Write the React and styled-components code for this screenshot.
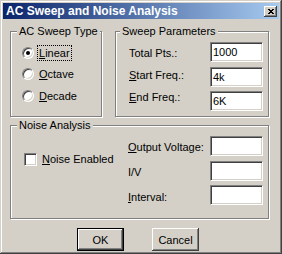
import React from 'react';
import styled, { createGlobalStyle } from 'styled-components';

const Global = createGlobalStyle`
  html, body { margin: 0; padding: 0; background: #D4D0C8; }
  body { font-family: "Liberation Sans", Arial, sans-serif; font-size: 11px; color: #000; }
  *, *::before, *::after { box-sizing: border-box; }
`;

const Window = styled.div`
  width: 282px;
  height: 254px;
  background: #D4D0C8;
  padding: 3px;
  display: flex;
  flex-direction: column;
  box-shadow: inset -1px -1px 0 #404040, inset 1px 1px 0 #D4D0C8,
    inset -2px -2px 0 #808080, inset 2px 2px 0 #fff;
`;

const TitleBar = styled.div`
  flex: none;
  height: 16px;
  display: flex;
  align-items: center;
  justify-content: space-between;
  padding: 0 2px 0 3px;
  background: linear-gradient(to right, #0A246A, #A6CAF0);
  color: #fff;
  font-weight: bold;
  font-size: 12px;
  line-height: 16px;
`;

const CloseBtn = styled.span`
  width: 13px;
  height: 11px;
  background: #D4D0C8;
  display: flex;
  align-items: center;
  justify-content: center;
  box-shadow: inset -1px -1px 0 #404040, inset 1px 1px 0 #fff, inset -2px -2px 0 #808080;
`;

const Body = styled.div`
  flex: 1;
  display: flex;
  flex-direction: column;
  padding: 12px 10px 0 7px;
`;

const TopRow = styled.div`
  flex: none;
  display: flex;
  gap: 13px;
  height: 86px;
`;

const Group = styled.div`
  position: relative;
  border: 1px solid #808080;
  box-shadow: 1px 1px 0 #fff, inset 1px 1px 0 #fff;
  display: flex;
  width: ${p => (p.$width ? `${p.$width}px` : 'auto')};
  flex: ${p => (p.$width ? 'none' : '1')};
  height: ${p => p.$height}px;
  margin-top: ${p => p.$mt || 0}px;
  padding: ${p => p.$pad};
`;

const Legend = styled.span`
  position: absolute;
  top: -7px;
  left: ${p => p.$left || 6}px;
  padding: 0 2px;
  background: #D4D0C8;
  line-height: 13px;
  white-space: nowrap;
`;

const Column = styled.div`
  display: flex;
  flex-direction: column;
  flex: ${p => (p.$w ? 'none' : '1')};
  width: ${p => (p.$w ? `${p.$w}px` : 'auto')};
  padding-top: ${p => p.$pt || 0}px;
  padding-left: ${p => p.$pl || 0}px;
  gap: ${p => p.$gap || 0}px;
`;

const Row = styled.div`
  flex: none;
  display: flex;
  align-items: center;
  height: ${p => p.$h}px;
  white-space: nowrap;
`;

const Label = styled.span`
  display: inline-block;
  line-height: 12px;
  padding: 1px 1px;
  margin-left: ${p => p.$ml || 0}px;
  border: 1px dotted ${p => (p.$focused ? '#000' : 'transparent')};
  white-space: nowrap;
`;

const Key = styled.span`
  text-decoration: underline;
`;

const Radio = styled.span`
  position: relative;
  flex: none;
  width: 12px;
  height: 12px;
  border-radius: 50%;
  border: 1px solid;
  border-color: #808080 #fff #fff #808080;
  background: #fff;
  box-shadow: inset 1px 1px 0 #404040, inset -1px -1px 0 #D4D0C8;
  &::after {
    content: '';
    display: ${p => (p.$checked ? 'block' : 'none')};
    position: absolute;
    left: 3px;
    top: 3px;
    width: 4px;
    height: 4px;
    border-radius: 50%;
    background: #000;
  }
`;

const Check = styled.span`
  flex: none;
  width: 13px;
  height: 13px;
  border: 1px solid;
  border-color: #808080 #fff #fff #808080;
  background: #fff;
  box-shadow: inset 1px 1px 0 #404040, inset -1px -1px 0 #D4D0C8;
`;

const Field = styled.div`
  flex: none;
  height: 20px;
  background: #fff;
  border: 1px solid;
  border-color: #808080 #fff #fff #808080;
  box-shadow: inset 1px 1px 0 #404040, inset -1px -1px 0 #D4D0C8;
  padding-left: 2px;
  line-height: 18px;
  white-space: nowrap;
`;

const ButtonRow = styled.div`
  flex: none;
  display: flex;
  gap: 28px;
  margin-top: 9px;
  padding-left: 67px;
`;

const Button = styled.button`
  width: 47px;
  height: 23px;
  padding: 0;
  margin: 0;
  border: none;
  background: #D4D0C8;
  color: #000;
  font: 11px "Liberation Sans", Arial, sans-serif;
  box-shadow: ${p =>
    p.$default
      ? 'inset 0 0 0 1px #000, inset -2px -2px 0 #404040, inset 2px 2px 0 #fff, inset -3px -3px 0 #808080'
      : 'inset -1px -1px 0 #404040, inset 1px 1px 0 #fff, inset -2px -2px 0 #808080'};
`;

const xPattern = ['xx  xx', ' xxxx ', '  xx  ', ' xxxx ', 'xx  xx'];

const CloseIcon = () => (
  <svg width="6" height="5" viewBox="0 0 6 5" shapeRendering="crispEdges">
    {xPattern.flatMap((line, y) =>
      line.split('').map((c, x) =>
        c === 'x' ? <rect key={`${x}-${y}`} x={x} y={y} width="1" height="1" fill="#000" /> : null
      )
    )}
  </svg>
);

export default function App() {
  return (
    <>
      <Global />
      <Window>
        <TitleBar>
          <span>AC Sweep and Noise Analysis</span>
          <CloseBtn><CloseIcon /></CloseBtn>
        </TitleBar>
        <Body>
          <TopRow>
            <Group $width={92} $height={86} $pad="10px 0 0 11px">
              <Legend>AC Sweep Type</Legend>
              <Column>
                <Row $h={21.5}>
                  <Radio $checked />
                  <Label $ml={3} $focused><Key>L</Key>inear</Label>
                </Row>
                <Row $h={21.5}>
                  <Radio />
                  <Label $ml={3}><Key>O</Key>ctave</Label>
                </Row>
                <Row $h={21.5}>
                  <Radio />
                  <Label $ml={3}><Key>D</Key>ecade</Label>
                </Row>
              </Column>
            </Group>
            <Group $height={86} $pad="10px 5px 0 13px">
              <Legend $left={4}>Sweep Parameters</Legend>
              <Column>
                <Row $h={22}>Total Pts.:</Row>
                <Row $h={22}><span><Key>S</Key>tart Freq.:</span></Row>
                <Row $h={22}><span><Key>E</Key>nd Freq.:</span></Row>
              </Column>
              <Column $w={53} $gap={4.5}>
                <Field>1000</Field>
                <Field>4k</Field>
                <Field>6K</Field>
              </Column>
            </Group>
          </TopRow>
          <Group $height={88} $mt={8} $pad="0 5px 0 0">
            <Legend>Noise Analysis</Legend>
            <Column $w={117} $pt={25} $pl={13}>
              <Row $h={16}>
                <Check />
                <Label $ml={3}><Key>N</Key>oise Enabled</Label>
              </Row>
            </Column>
            <Column $w={82} $pt={8}>
              <Row $h={25}><span><Key>O</Key>utput Voltage:</span></Row>
              <Row $h={25}>I/V</Row>
              <Row $h={25}><span><Key>I</Key>nterval:</span></Row>
            </Column>
            <Column $w={53} $pt={10} $gap={4.5}>
              <Field />
              <Field />
              <Field />
            </Column>
          </Group>
          <ButtonRow>
            <Button $default>OK</Button>
            <Button>Cancel</Button>
          </ButtonRow>
        </Body>
      </Window>
    </>
  );
}
